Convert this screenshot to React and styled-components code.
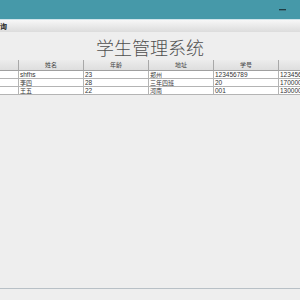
import React from "react";
import styled, { createGlobalStyle } from "styled-components";

const Global = createGlobalStyle`
  html, body { margin: 0; padding: 0; background: #eeeeee; overflow: hidden; }
  body { font-family: "Liberation Sans", "Noto Sans CJK SC", sans-serif; }
`;

const Window = styled.div`
  width: 392px;
  height: 300px;
  margin-left: -46px;
  display: flex;
  flex-direction: column;
  background: #eeeeee;
`;

const TitleBar = styled.div`
  height: 19px;
  background: #4699a9;
  border-bottom: 1px solid #cfe4ea;
  display: flex;
  justify-content: flex-end;
  align-items: center;
  padding-right: 6px;
`;

const WinButton = styled.div`
  width: 23px;
  height: 19px;
  display: flex;
  align-items: center;
  justify-content: center;
`;

const MinGlyph = styled.span`
  display: block;
  width: 7px;
  height: 1px;
  background: #1f3d44;
  border-bottom: 1px solid #3f7784;
`;

const MenuBar = styled.div`
  height: 12px;
  background: linear-gradient(#f7f7f7, #dcdcdc);
  display: flex;
  align-items: center;
  padding-left: 39px;
`;

const MenuItem = styled.span`
  font-family: "Noto Sans CJK SC", sans-serif;
  font-size: 7px;
  font-weight: bold;
  color: #222;
  line-height: 12px;
`;

const Body = styled.div`
  flex: 1;
  display: flex;
  flex-direction: column;
`;

const Heading = styled.h1`
  margin: 4px 0 2px;
  text-align: center;
  font-family: "Noto Sans CJK SC", sans-serif;
  font-weight: 300;
  font-size: 18px;
  line-height: 22px;
  color: #505050;
`;

const Table = styled.div`
  display: flex;
  flex-direction: column;
`;

const Row = styled.div`
  display: grid;
  grid-template-columns: repeat(6, 65px);
  height: ${(p) => (p.$head ? "11px" : "8px")};
`;

const HeadCell = styled.div`
  background: linear-gradient(#ececec, #dedede);
  border-right: 1px solid #a8a8a8;
  border-bottom: 1px solid #a0a0a0;
  font-family: "Noto Sans CJK SC", sans-serif;
  font-size: 6px;
  color: #444;
  text-align: center;
  line-height: 10px;
  overflow: hidden;
  white-space: nowrap;
`;

const Cell = styled.div`
  background: #ffffff;
  border-right: 1px solid #b4b4b4;
  border-bottom: 1px solid #b4b4b4;
  font-family: ${(p) =>
    p.$cjk ? '"Noto Sans CJK SC", sans-serif' : '"Liberation Sans", sans-serif'};
  font-size: ${(p) => (p.$cjk ? "6px" : "6.5px")};
  color: #333;
  line-height: 7px;
  padding-left: 1px;
  overflow: hidden;
  white-space: nowrap;
`;

const Spacer = styled.div`
  flex: 1;
`;

const StatusBar = styled.div`
  height: 11px;
  border-top: 1px solid #b8c0c6;
  background: #eeeeee;
`;

const headers = ["编号", "姓名", "年龄", "地址", "学号", "电话"];
const rows = [
  ["", "shfhs", "23", "郑州", "123456789", "12345678901"],
  ["", "李四", "28", "三年四班", "20", "17000000000"],
  ["", "王五", "22", "河南", "001", "13000000000"],
];

const isCjk = (s) => /[\u4e00-\u9fff]/.test(s);

export default function App() {
  return (
    <>
      <Global />
      <Window>
        <TitleBar>
          <WinButton>
            <MinGlyph />
          </WinButton>
          <WinButton />
          <WinButton />
        </TitleBar>
        <MenuBar>
          <MenuItem>查询</MenuItem>
        </MenuBar>
        <Body>
          <Heading>学生管理系统</Heading>
          <Table>
            <Row $head>
              {headers.map((h) => (
                <HeadCell key={h}>{h}</HeadCell>
              ))}
            </Row>
            {rows.map((r, i) => (
              <Row key={i}>
                {r.map((c, j) => (
                  <Cell key={j} $cjk={isCjk(c)}>
                    {c}
                  </Cell>
                ))}
              </Row>
            ))}
          </Table>
          <Spacer />
          <StatusBar />
        </Body>
      </Window>
    </>
  );
}
